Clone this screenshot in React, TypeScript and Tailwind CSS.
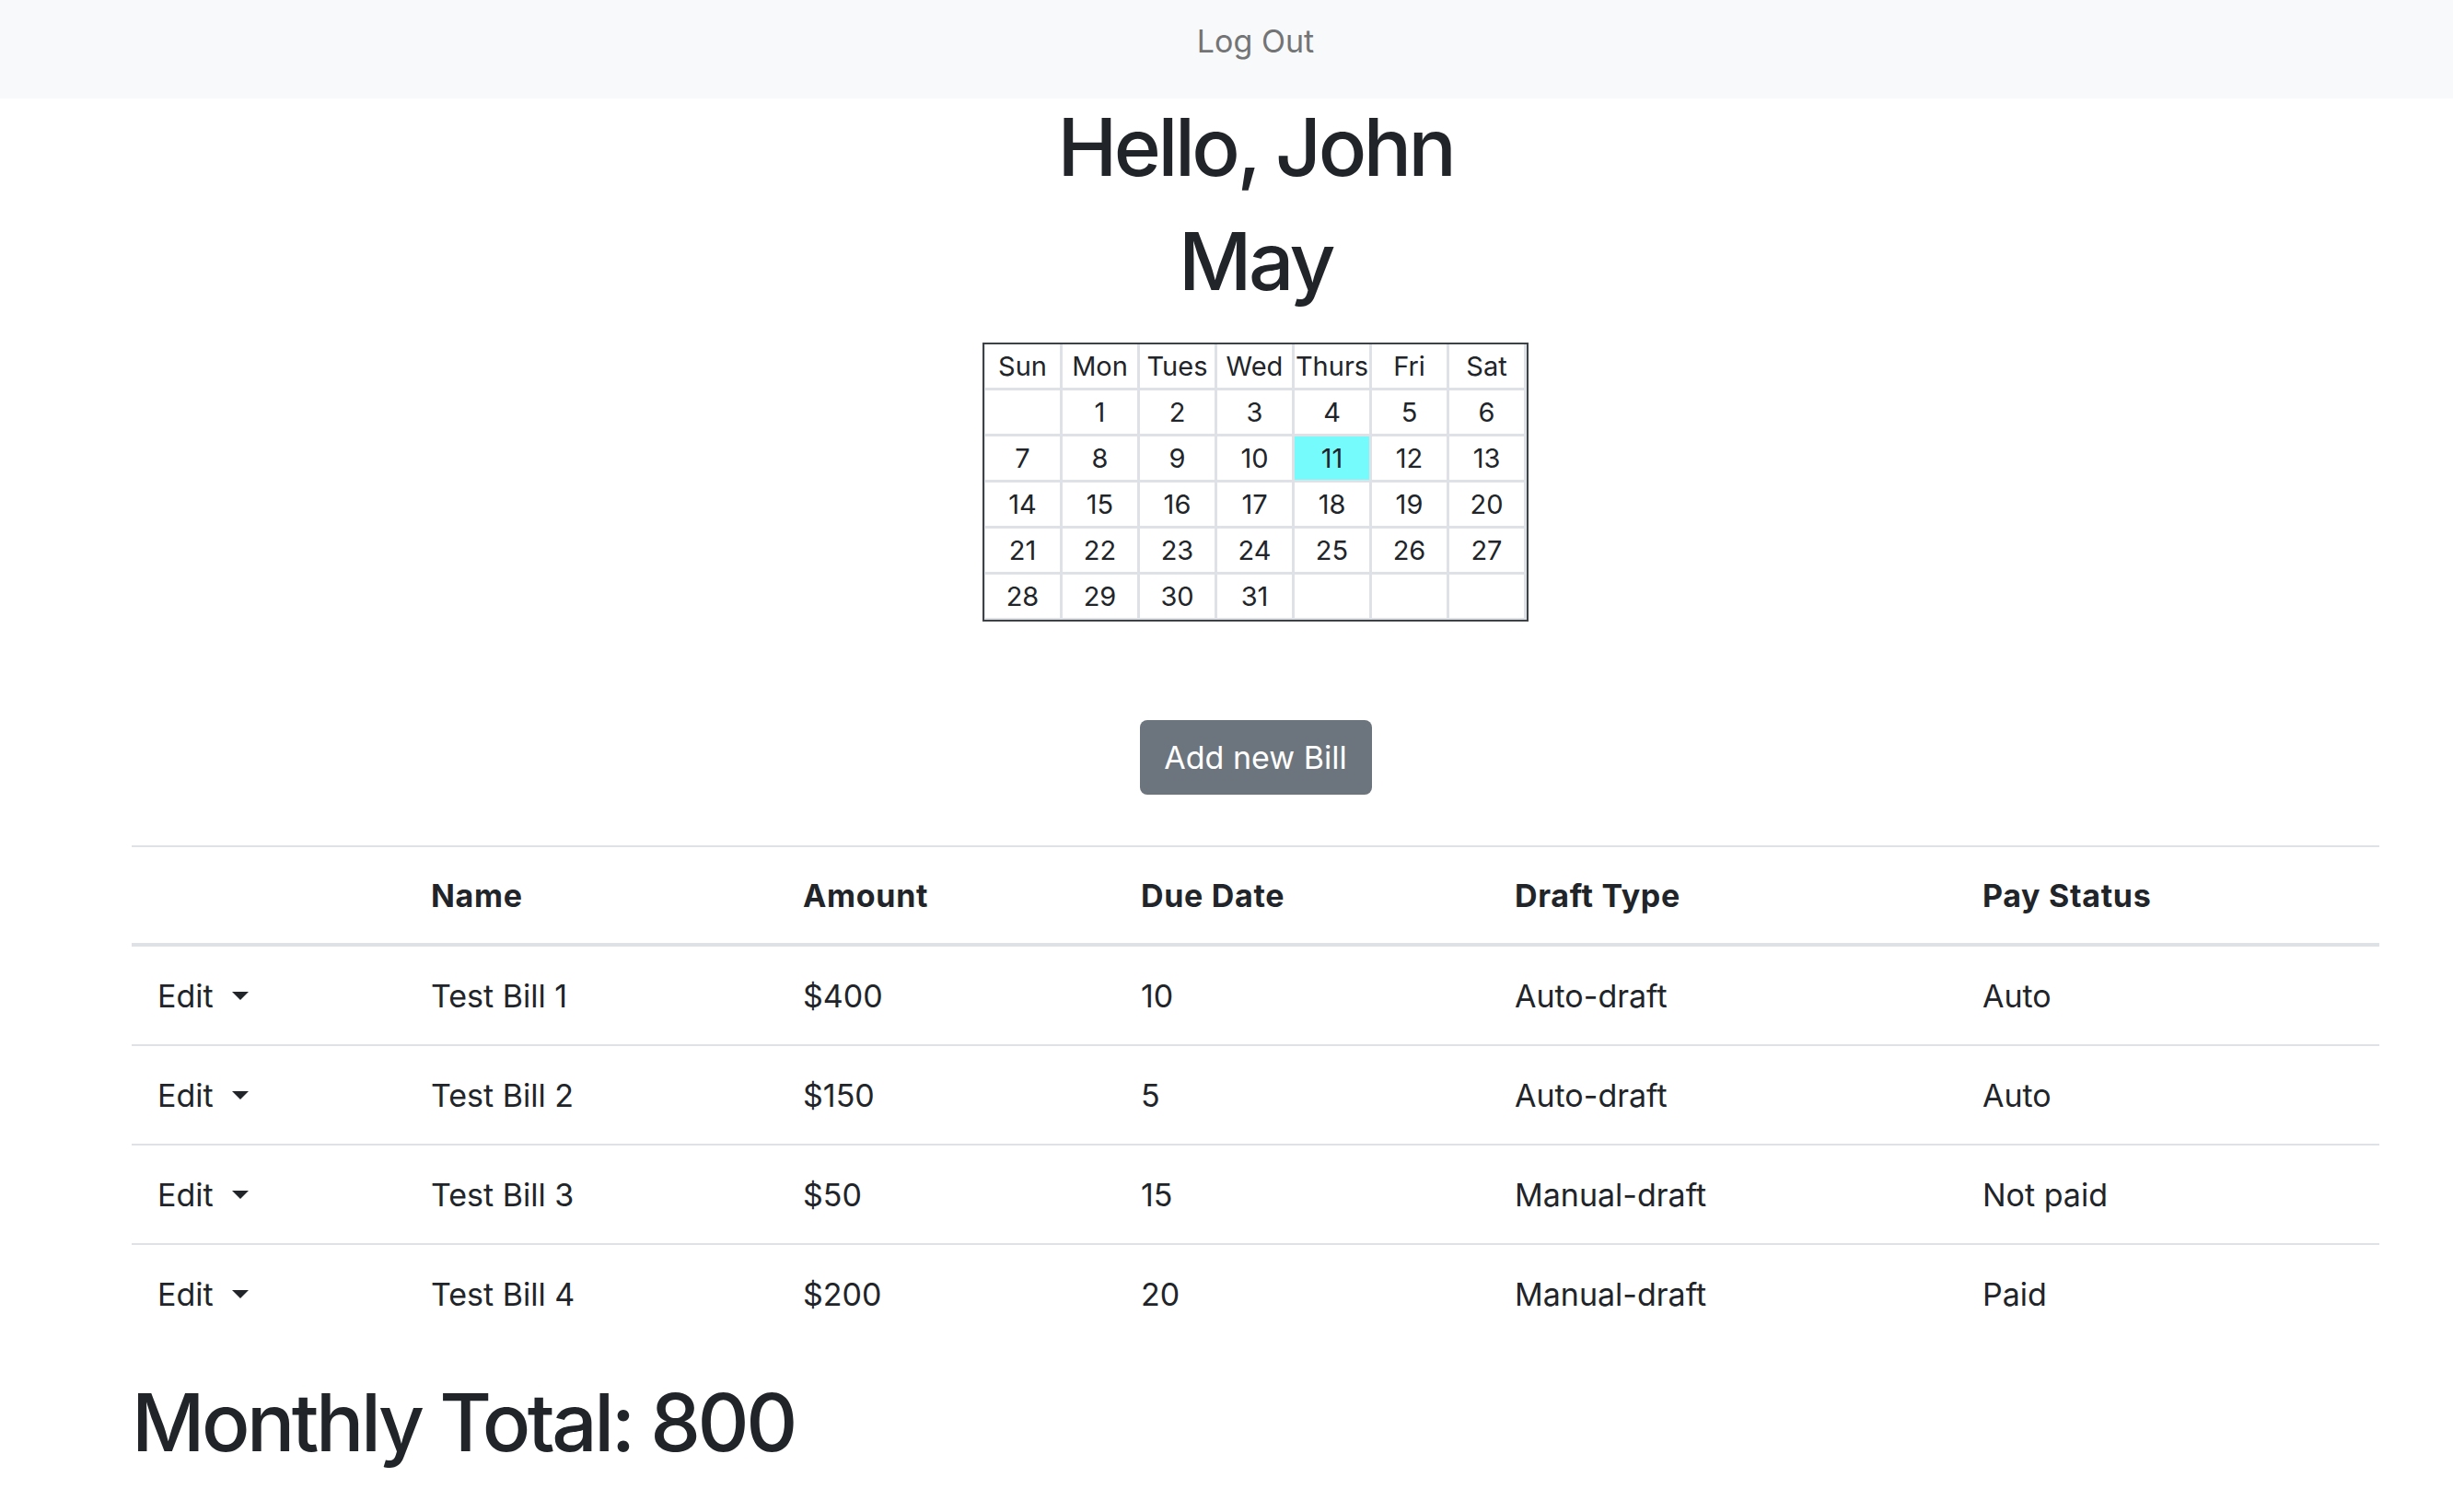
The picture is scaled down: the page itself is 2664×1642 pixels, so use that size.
import React from "react";

const days = ["Sun", "Mon", "Tues", "Wed", "Thurs", "Fri", "Sat"];
const weeks: string[][] = [
  ["", "1", "2", "3", "4", "5", "6"],
  ["7", "8", "9", "10", "11", "12", "13"],
  ["14", "15", "16", "17", "18", "19", "20"],
  ["21", "22", "23", "24", "25", "26", "27"],
  ["28", "29", "30", "31", "", "", ""],
];

const bills = [
  { name: "Test Bill 1", amount: "$400", due: "10", draft: "Auto-draft", status: "Auto" },
  { name: "Test Bill 2", amount: "$150", due: "5", draft: "Auto-draft", status: "Auto" },
  { name: "Test Bill 3", amount: "$50", due: "15", draft: "Manual-draft", status: "Not paid" },
  { name: "Test Bill 4", amount: "$200", due: "20", draft: "Manual-draft", status: "Paid" },
];

const cols = "grid grid-cols-[297px_404px_367px_406px_508px_459px]";

export default function App() {
  return (
    <div className="min-h-screen bg-white text-[#212529] font-['Inter',sans-serif]">
      <nav className="h-[107px] bg-[#f8f9fa] pl-[143px] pr-[80px] pt-[20px]">
        <div className="text-center text-[34px] leading-[50px] text-[#737475]">Log Out</div>
      </nav>
      <main className="pl-[143px] pr-[80px]">
        <h1 className="text-center text-[87px] leading-[106px] font-medium tracking-[-0.04em]">Hello, John</h1>
        <h2 className="mt-[18px] text-center text-[87px] leading-[106px] font-medium tracking-[-0.04em]">May</h2>
        <div className="mt-[35px] flex justify-center">
          <div className="border-2 border-[#3d4247] bg-[#dee2e6] pl-[1px] pt-0 pr-[3px] pb-[2px]">
            <div className="grid grid-cols-[repeat(7,81px)] auto-rows-[47px] gap-[3px] text-[29px]">
              {days.map((d) => (
                <div key={d} className="flex items-center justify-center bg-white">
                  {d}
                </div>
              ))}
              {weeks.flat().map((d, i) => (
                <div
                  key={i}
                  className={
                    d === "11"
                      ? "flex items-center justify-center bg-[#76fbfd]"
                      : "flex items-center justify-center bg-white"
                  }
                >
                  {d}
                </div>
              ))}
            </div>
          </div>
        </div>
        <div className="mt-[107px] flex justify-center">
          <button className="h-[81px] w-[252px] rounded-[8px] bg-[#6c757d] text-[34px] text-white">
            Add new Bill
          </button>
        </div>
        <div className="mt-[55px] text-[34px]">
          <div className={`${cols} h-[110px] items-center border-t-2 border-b-4 border-[#dee2e6] font-bold tracking-[0.02em]`}>
            <div></div>
            <div className="pl-[28px]">Name</div>
            <div className="pl-[28px]">Amount</div>
            <div className="pl-[28px]">Due Date</div>
            <div className="pl-[28px]">Draft Type</div>
            <div className="pl-[28px]">Pay Status</div>
          </div>
          {bills.map((b, i) => (
            <div
              key={b.name}
              className={
                i === 0
                  ? `${cols} h-[106px] items-center`
                  : `${cols} h-[108px] items-center border-t-2 border-[#dee2e6]`
              }
            >
              <div className="flex items-center pl-[28px]">
                <span>Edit</span>
                <span className="ml-[20px] h-0 w-0 border-x-[9px] border-t-[9px] border-x-transparent border-t-[#212529]"></span>
              </div>
              <div className="pl-[28px]">{b.name}</div>
              <div className="pl-[28px]">{b.amount}</div>
              <div className="pl-[28px]">{b.due}</div>
              <div className="pl-[28px]">{b.draft}</div>
              <div className="pl-[28px]">{b.status}</div>
            </div>
          ))}
        </div>
        <div className="mt-[34px] text-[87px] leading-[106px] font-medium tracking-[-0.04em]">Monthly Total: 800</div>
      </main>
    </div>
  );
}
